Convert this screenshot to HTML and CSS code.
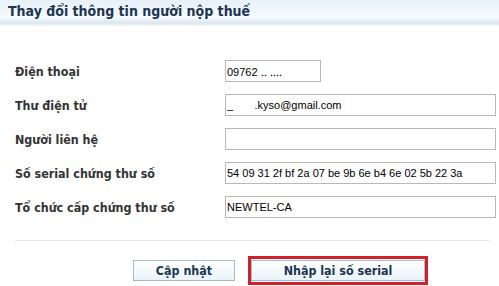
FILE: index.html
```html
<!DOCTYPE html>
<html>

<head>
    <meta charset="UTF-8">
    <title>Thay đổi thông tin người nộp thuế</title>
    <link rel="stylesheet" href="styles.css">
</head>

<body>
    <div class="page">
        <h1 class="title">Thay đổi thông tin người nộp thuế</h1>
        <div class="form">
            <label class="label" for="phone">Điện thoại</label>
            <input class="field field-short" id="phone" type="text" value="09762 ‥ ‥‥">

            <label class="label" for="email">Thư điện tử</label>
            <input class="field" id="email" type="text" value="_       .kyso@gmail.com">

            <label class="label" for="contact">Người liên hệ</label>
            <input class="field" id="contact" type="text" value="">

            <label class="label" for="serial">Số serial chứng thư số</label>
            <input class="field" id="serial" type="text" value="54 09 31 2f bf 2a 07 be 9b 6e b4 6e 02 5b 22 3a">

            <label class="label" for="issuer">Tổ chức cấp chứng thư số</label>
            <input class="field" id="issuer" type="text" value="NEWTEL-CA">
        </div>
        <hr class="divider">
        <div class="actions">
            <button class="button">Cập nhật</button>
            <div class="highlight">
                <button class="button button-wide">Nhập lại số serial</button>
            </div>
        </div>
    </div>
</body>

</html>
```

FILE: styles.css
```css
* {
    box-sizing: border-box;
    font-family: Tahoma, "DejaVu Sans Condensed", "DejaVu Sans", sans-serif;
}

body {
    margin: 0;
    background-color: #ffffff;
}

.page {
    width: 499px;
    height: 286px;
    overflow: hidden;
}

.title {
    margin: 0;
    height: 26px;
    padding: 3px 0 0 8px;
    font-size: 14px;
    font-weight: bold;
    color: #1d3650;
    background: linear-gradient(to bottom, #e6f1fb 0px, #f6fafe 18px, #e9f1f7 20px, #dbe6ee 23px, #f4f8fb 26px);
}

.form {
    display: grid;
    grid-template-columns: 210px 271px;
    row-gap: 12px;
    align-items: center;
    padding: 34px 0 0 15px;
}

.label {
    font-size: 12.4px;
    font-weight: bold;
    color: #333333;
}

.field {
    width: 271px;
    height: 22px;
    margin: 0;
    padding: 0 1px;
    border: 1px solid #b8b8b8;
    font-family: "Liberation Sans", Arial, sans-serif;
    font-size: 11px;
    color: #000000;
    background-color: #ffffff;
    outline: none;
}

.field-short {
    width: 96px;
}

.divider {
    margin: 22px 9px 0 15px;
    border: none;
    border-top: 1px solid #e6e6e6;
}

.actions {
    display: flex;
    align-items: center;
    gap: 13px;
    padding: 15px 0 0 133px;
}

.button {
    width: 102px;
    height: 21px;
    padding: 0;
    border: 1px solid #a7bccb;
    background: linear-gradient(to bottom, #ffffff, #eaf3fa);
    font-size: 12.4px;
    font-weight: bold;
    color: #1d3650;
    cursor: pointer;
}

.highlight {
    border: 3px solid #d0212b;
    padding: 1px 0;
    display: flex;
}

.button-wide {
    width: 174px;
}
```
